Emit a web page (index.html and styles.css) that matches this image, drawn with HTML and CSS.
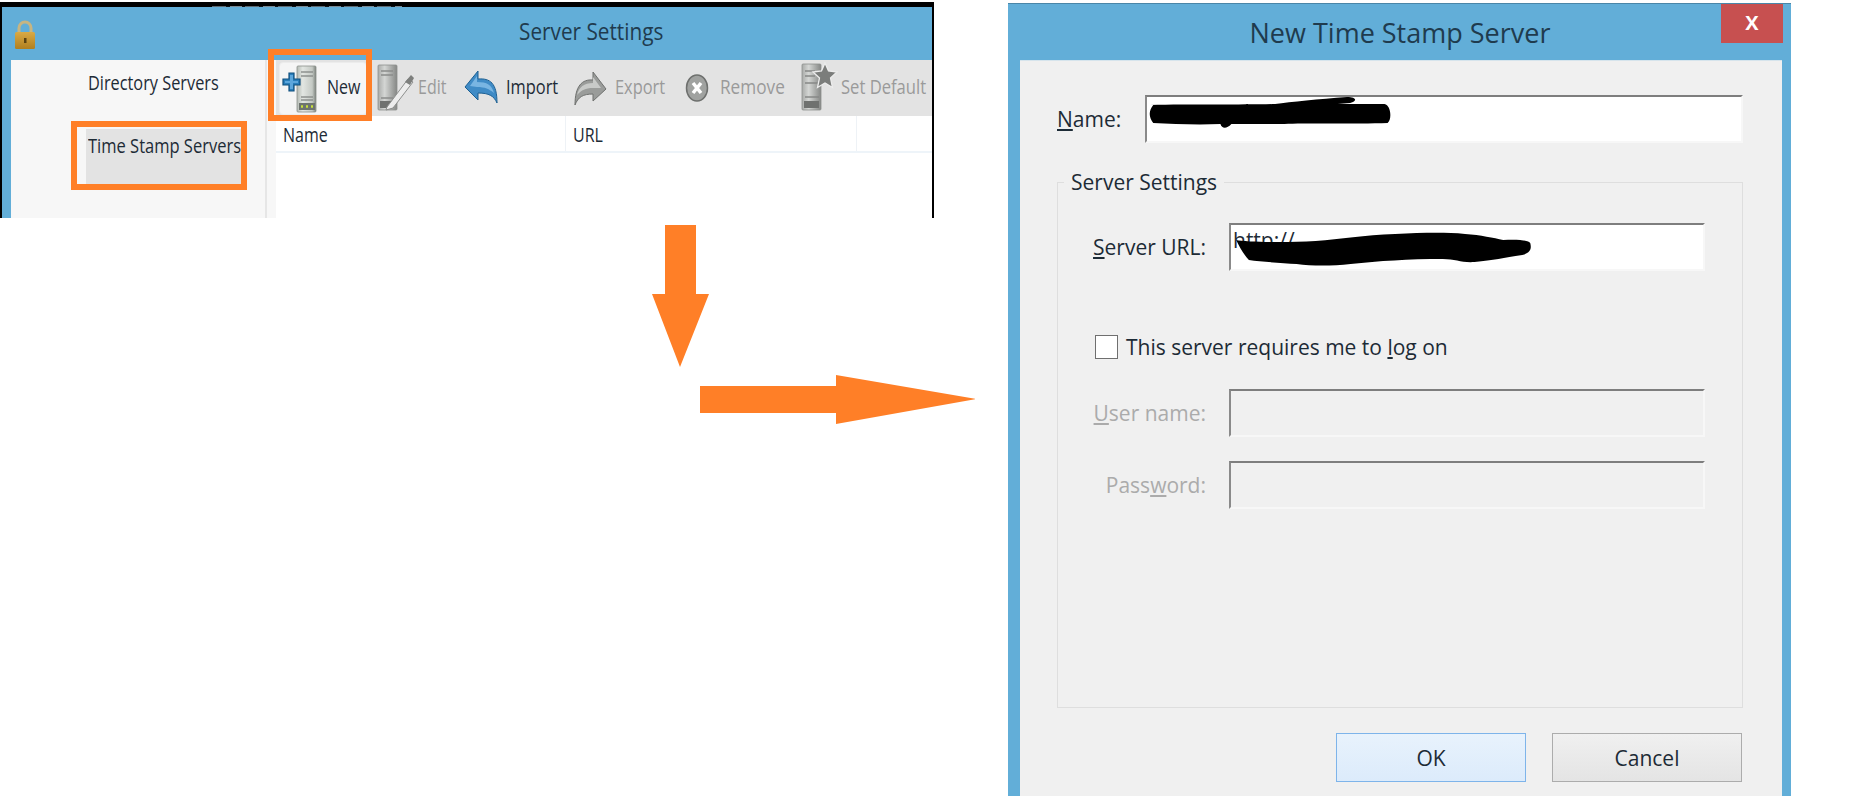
FILE: index.html
```html
<!DOCTYPE html>
<html lang="en">
<head>
<meta charset="utf-8">
<title>Time Stamp Server setup</title>
<link rel="stylesheet" href="styles.css">
</head>
<body>
<section class="win">
  <header class="win-bar">
    <svg class="lock" width="24" height="30" viewBox="0 0 24 30"><defs><linearGradient id="gold" x1="0" x2="0" y1="0" y2="1"><stop offset="0" stop-color="#d9aa45"/><stop offset="1" stop-color="#b07f1f"/></linearGradient></defs><path d="M5 14V8a6 6 0 0 1 12 0v6" fill="none" stroke="#c7b582" stroke-width="3"/><rect x="1" y="12" width="20" height="17" rx="1.5" fill="url(#gold)"/><rect x="10" y="18" width="2.5" height="5" fill="#5b4310"/></svg>
    <span class="win-title"><span class="t t-settings">Server Settings</span></span>
  </header>
  <div class="win-body">
    <nav class="side">
      <div class="side-item"><span class="t t-dir">Directory Servers</span></div>
      <div class="side-item is-active"><span class="t t-ts">Time Stamp Servers</span><i class="mark mark-ts"></i></div>
    </nav>
    <div class="main">
      <div class="toolbar">
        <div class="tool tool-new">
          <svg width="48" height="52" viewBox="0 0 48 52"><defs><linearGradient id="srv" x1="0" x2="1" y1="0" y2="0"><stop offset="0" stop-color="#b4bab4"/><stop offset=".3" stop-color="#e2e6e2"/><stop offset=".8" stop-color="#c4c9c4"/><stop offset="1" stop-color="#7b817c"/></linearGradient><linearGradient id="srvg" x1="0" x2="1" y1="0" y2="0"><stop offset="0" stop-color="#a9aba9"/><stop offset=".35" stop-color="#d4d6d4"/><stop offset="1" stop-color="#858785"/></linearGradient></defs><rect x="18" y="3" width="19" height="46" rx="1" fill="url(#srv)" stroke="#8b908c" stroke-width=".8"/><path d="M22 9h12M22 13h12M22 34h12M22 37h12" stroke="#8d918e" stroke-width="1.5"/><rect x="20" y="40" width="16" height="7" fill="#6e746f"/><path d="M22 43.5h2M27 43.5h2M32 43.5h2" stroke="#c8e03c" stroke-width="2.5"/><path d="M10 10h5v6h6v6h-6v6h-5v-6H4v-6h6z" fill="#2a7ebb" stroke="#11507f" stroke-width="1.2"/><path d="M11 12h3v6h5v2h-5v6h-3v-6H6v-2h5z" fill="#5ca6dc"/></svg>
          <span class="t t-new">New</span><i class="mark mark-new"></i>
        </div>
        <div class="tool">
          <svg width="43" height="52" viewBox="0 0 43 52"><rect x="3" y="3" width="19" height="45" rx="1" fill="url(#srvg)" stroke="#8d8f8d" stroke-width=".8"/><path d="M6 9h12M6 13h12M6 36h12" stroke="#8a8c8a" stroke-width="1.5"/><rect x="5" y="39" width="14" height="7" fill="#6f716f"/><path d="M12 45 33 17l5 3-20 26-7 2z" fill="#ededed" stroke="#8d8f8d"/><path d="M30 20l6-7 3 3-4 7z" fill="#7d7f7d"/></svg>
          <span class="t t-edit is-off">Edit</span>
        </div>
        <div class="tool">
          <svg width="44" height="52" viewBox="0 0 44 52"><path d="M3 25 16 9v8c12-1 19 4 19 24-3-7-8-10-19-10v7z" fill="#3f8bc6" stroke="#1c5f92"/><path d="M8 24 15 14v6c10 0 15 3 17 11-5-4-9-6-17-6z" fill="#79b5e2"/></svg>
          <span class="t t-import">Import</span>
        </div>
        <div class="tool">
          <svg width="43" height="52" viewBox="0 0 43 52"><path d="M34 27 21 10v8C10 17 3 24 3 43c3-8 8-11 18-11v7z" fill="#9a9c9a" stroke="#6f716f"/><path d="M29 26l-8-11v6c-9 0-14 4-16 12 5-5 8-7 16-7z" fill="#c8cac8"/></svg>
          <span class="t t-export is-off">Export</span>
        </div>
        <div class="tool">
          <svg width="39" height="52" viewBox="0 0 39 52"><ellipse cx="14" cy="26" rx="10.5" ry="13" fill="#a0a2a0" stroke="#6e706e" stroke-width="1.5"/><path d="M10 21l8 10M18 21l-8 10" stroke="#fff" stroke-width="3.5"/></svg>
          <span class="t t-remove is-off">Remove</span>
        </div>
        <div class="tool">
          <svg width="43" height="52" viewBox="0 0 43 52"><rect x="4" y="2" width="19" height="46" rx="1" fill="url(#srvg)" stroke="#8d8f8d" stroke-width=".8"/><path d="M7 9h10M7 14h10M7 21h14M7 35h14" stroke="#868886" stroke-width="1.5"/><rect x="6" y="39" width="15" height="7" fill="#6f716f"/><path d="M27 1l3.500 8 8.500 1-6.500 6 2 9.500-7.500-4.500-7.500 4.500 2-9.500-6.500-6 8.500-1z" fill="#7b7d7b" stroke="#ededed" stroke-width="1.3"/></svg>
          <span class="t t-default is-off">Set Default</span>
        </div>
      </div>
      <div class="thead">
        <div class="th th-name"><span class="t t-name">Name</span></div>
        <div class="th th-url"><span class="t t-url">URL</span></div>
        <div class="th"></div>
      </div>
    </div>
  </div>
</section>

<svg class="arrows" width="340" height="210" viewBox="0 0 340 210"><path class="arrow" d="M30 1h31v69h13l-29 73-28-73h13z"/><path class="arrow" d="M65 162h136v-11l140 24-140 25v-11H65z"/></svg>

<section class="dialog">
  <header class="dialog-bar">
    <span class="t t-dtitle">New Time Stamp Server</span>
    <div class="close"><span class="t-x">x</span></div>
  </header>
  <div class="dialog-body">
    <div class="name-row">
      <label class="t"><u>N</u>ame:</label>
      <div class="field">
        <svg class="scribble" width="250" height="36" viewBox="0 0 160 36" preserveAspectRatio="none"><path d="M2 8c25-1 60 0 80-1 10-2 28-5 46-7 6 0 7 4 2 6l-8 1 30 0c4 1 5 15 2 19-20 1-55 0-66 1l-30 0-4 0c-3 5-6 5-7 0-15 1-30 0-43-1-3-6-3-12 0-18z"/></svg>
      </div>
    </div>
    <div class="group">
      <span class="legend"><span class="t">Server Settings</span></span>
      <div class="row url-row">
        <label class="t"><u>S</u>erver URL:</label>
        <div class="field">
          <span class="url-text">http://</span>
          <svg class="scribble scribble-url" width="302" height="34" viewBox="0 0 190 34" preserveAspectRatio="none"><path d="M2 8c6 2 30 3 50 1 16-2 30-6 50-7 16-1 30-2 44 0 10 1 18 4 24 6 8-1 16 0 17 3 1 6 0 10-5 12-12 3-18 5-30 7-8 1-12-3-20-3-22 0-40 2-58 5-12 2-24 2-34 0-9-1-22-2-30-4-3-5-6-13-8-20z"/></svg>
        </div>
      </div>
      <div class="check-row">
        <span class="check"></span>
        <label class="t">This server requires me to <u>l</u>og on</label>
      </div>
      <div class="row user-row is-disabled">
        <label class="t"><u>U</u>ser name:</label>
        <div class="field field-off"></div>
      </div>
      <div class="row pass-row is-disabled">
        <label class="t">Pass<u>w</u>ord:</label>
        <div class="field field-off"></div>
      </div>
    </div>
    <div class="actions">
      <button class="btn btn-ok" type="button"><span class="t">OK</span></button>
      <button class="btn btn-cancel" type="button"><span class="t">Cancel</span></button>
    </div>
  </div>
</section>
</body>
</html>
```

FILE: styles.css
```css
* { box-sizing: border-box; }
html, body { margin: 0; height: 796px; overflow: hidden; background: #fff; }
body { font-family: "Open Sans", "Liberation Sans", sans-serif; color: #1d2b36; position: relative; }

.t { display: inline-block; white-space: nowrap; transform-origin: left center; font-size: 21px; line-height: 24px; }
.is-off { color: #9a9a9a; }

/* left window */
.win { position: absolute; left: 0; top: 2px; width: 934px; height: 216px; border: solid #000; border-width: 5px 2px 0 2px; background: #62aed8; display: flex; flex-direction: column; }
.win-bar { height: 53px; display: flex; align-items: center; padding-left: 12px; position: relative; flex: none; }
.win-bar::before { content: ""; position: absolute; left: 210px; top: -1px; width: 190px; height: 1px; background: repeating-linear-gradient(90deg, #5e6a72 0 14px, #101418 14px 18px, #7b8a94 18px 30px, #101418 30px 33px); }
.lock { flex: none; margin-top: 2px; }
.win-title { position: absolute; left: 517px; top: 10px; color: #1f3b4e; }
.t-settings { font-size: 24px; line-height: 28px; transform: scaleX(.865); }
.win-body { flex: 1; margin-left: 9px; display: flex; min-height: 0; background: #f7f7f7; }
.side { width: 256px; flex: none; border-right: 2px solid #e6e6e6; padding: 5px 0 0 75px; display: flex; flex-direction: column; gap: 8px; }
.side-item { width: 156px; height: 55px; padding: 6px 0 0 2px; position: relative; line-height: 22px; }
.is-active { background: #e3e3e3; margin-top: 1px; padding-top: 5px; }
.mark { position: absolute; border: 6px solid #ff7f27; display: block; pointer-events: none; }
.mark-ts { left: -15px; right: -5px; top: -8px; bottom: -6px; }
.mark-new { left: -12px; right: -6px; top: -14px; bottom: -7px; }
.t-dir { font-size: 20px; transform: scaleX(.815); }
.t-ts { font-size: 20px; transform: scaleX(.825); }
.main { flex: 1; min-width: 0; background: #fff; margin-left: 9px; display: flex; flex-direction: column; }
.toolbar { height: 56px; background: #e3e3e3; padding-left: 3px; display: grid; grid-template-columns: 96px 87px 110px 111px 115px minmax(0, 1fr); flex: none; }
.tool { display: flex; align-items: center; position: relative; min-width: 0; }
.tool svg { flex: none; }
.tool-new { width: 88px; height: 53px; margin-top: 2px; background: #f5f5f5; border: 1px solid #ececec; border-radius: 4px; }
.tool-new svg { margin-left: -1px; }
.tool .t { font-size: 20px; margin-top: -3px; }
.t-new, .t-edit { transform: scaleX(.8); }
.t-import, .t-export { transform: scaleX(.82); }
.tool .t-remove { transform: scaleX(.86); margin-left: -2px; }
.t-default { transform: scaleX(.83); }
.thead { height: 37px; display: grid; grid-template-columns: 290px 291px minmax(0, 1fr); border-bottom: 2px solid #eef4f9; }
.th { padding: 7px 0 0 7px; border-right: 1px solid #eef2f6; }
.th:last-child { border-right: 0; }
.th .t { font-size: 20px; transform: scaleX(.8); }

/* arrows */
.arrows { position: absolute; left: 635px; top: 224px; }
.arrow { fill: #ff7f27; }

/* dialog */
.dialog { position: absolute; left: 1008px; top: 3px; width: 783px; height: 793px; background: #62aed8; border-top: 1px solid #4a86a8; display: flex; flex-direction: column; }
.dialog-bar { height: 56px; flex: none; position: relative; display: flex; justify-content: center; align-items: center; color: #1f3b4e; }
.t-dtitle { font-size: 27px; line-height: 32px; margin: 2px 0 0 1px; }
.close { position: absolute; right: 8px; top: 0; width: 62px; height: 39px; background: #c75050; color: #fff; display: flex; align-items: center; justify-content: center; }
.t-x { font-size: 25px; font-weight: 600; line-height: 24px; margin-top: -8px; }
.dialog-body { flex: 1; margin: 0 9px 0 12px; background: #f0f0f0; border-top: 1px solid #d6e4ec; padding: 34px 39px 0 37px; }
.name-row { display: grid; grid-template-columns: 88px 1fr; height: 48px; align-items: center; }
.field { height: 48px; background: #fff; border: 2px solid #f7f7f7; border-top-color: #7e7e7e; border-left-color: #8a8a8a; position: relative; overflow: hidden; }
.field-off { background: #f0f0f0; }
.scribble { position: absolute; left: 0; top: 0; fill: #000; }
.scribble-url { left: 2px; top: 7px; }
.url-text { position: absolute; left: 2px; top: 3px; font-size: 21px; line-height: 24px; }
.group { margin-top: 39px; height: 526px; border: 1px solid #dedede; padding: 40px 0 0 37px; position: relative; }
.legend { position: absolute; left: 6px; top: -13px; background: #f0f0f0; padding: 0 7px; height: 24px; display: block; }
.row { display: grid; grid-template-columns: 111px 476px; column-gap: 23px; height: 48px; align-items: center; }
.row label { justify-self: end; }
.check-row { display: flex; align-items: center; gap: 8px; height: 24px; margin-top: 64px; }
.check { width: 23px; height: 24px; background: #fff; border: 1px solid #6f6f6f; flex: none; }
.user-row { margin-top: 30px; }
.pass-row { margin-top: 24px; }
.is-disabled label { color: #ababab; }
.actions { display: flex; justify-content: flex-end; gap: 26px; margin-top: 25px; padding-right: 1px; }
.btn { width: 190px; height: 49px; padding: 0; font: inherit; color: inherit; display: flex; align-items: center; justify-content: center; }
.btn-ok { background: linear-gradient(#e8f2fc, #dcebfb); border: 1px solid #7eb4ea; }
.btn-cancel { background: linear-gradient(#f0f0f0, #e4e4e4); border: 1px solid #acacac; }
```
